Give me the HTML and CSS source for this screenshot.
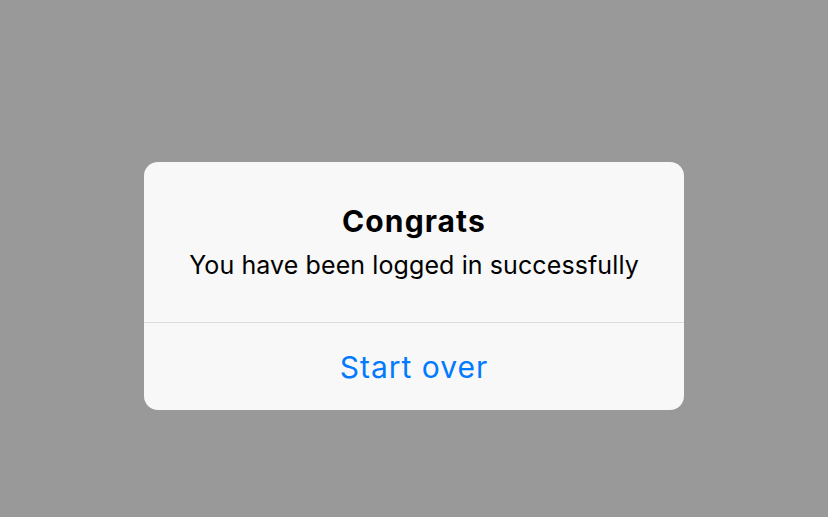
FILE: index.html
```html
<!DOCTYPE html>
<html>
<head>
<meta charset="utf-8">
<link rel="stylesheet" href="styles.css">
</head>
<body>
<div class="overlay">
  <div class="alert">
    <div class="alert-body">
      <div class="alert-title">Congrats</div>
      <div class="alert-message">You have been logged in successfully</div>
    </div>
    <div class="alert-actions">
      <button class="alert-button">Start over</button>
    </div>
  </div>
</div>
</body>
</html>
```
FILE: styles.css
```css
html, body {
  margin: 0;
  padding: 0;
  height: 100%;
}
body {
  background: #999999;
  font-family: Inter, "Noto Sans", sans-serif;
}
.overlay {
  display: flex;
  justify-content: center;
  padding-top: 162px;
}
.alert {
  width: 540px;
  background: #f8f8f8;
  border-radius: 14px;
  overflow: hidden;
  display: flex;
  flex-direction: column;
}
.alert-body {
  height: 161px;
  box-sizing: border-box;
  padding-top: 42px;
  display: flex;
  flex-direction: column;
  align-items: center;
  border-bottom: 1px solid #dcdcdc;
}
.alert-title {
  font-size: 30px;
  font-weight: 700;
  line-height: 35px;
  letter-spacing: 1.1px;
  color: #000;
}
.alert-message {
  margin-top: 11px;
  font-size: 25px;
  line-height: 30px;
  letter-spacing: 0.1px;
  color: #000;
}
.alert-actions {
  height: 87px;
  display: flex;
}
.alert-button {
  flex: 1;
  border: none;
  background: transparent;
  font-family: inherit;
  font-size: 30px;
  letter-spacing: 1px;
  color: #007aff;
  padding: 0;
  cursor: pointer;
}
```
